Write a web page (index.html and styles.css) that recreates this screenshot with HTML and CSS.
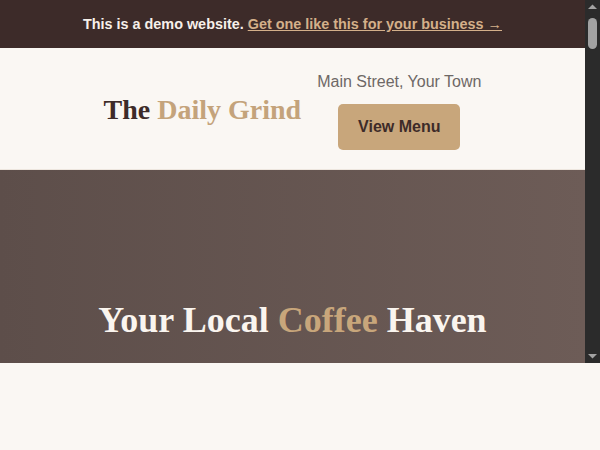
FILE: index.html
```html
<!DOCTYPE html>
<html lang="en">
<head>
<meta charset="utf-8">
<title>The Daily Grind</title>
<link rel="stylesheet" href="styles.css">
</head>
<body>
<div class="window">
  <div class="viewport">
    <div class="demo-bar">
      <span class="demo-note">This is a demo website.</span>
      <a class="demo-link" href="#">Get one like this for your business →</a>
    </div>
    <header class="site-header">
      <div class="logo">The <span class="accent">Daily Grind</span></div>
      <div class="header-info">
        <div class="address">Main Street, Your Town</div>
        <a class="btn" href="#">View Menu</a>
      </div>
    </header>
    <section class="hero">
      <h1 class="hero-title">Your Local <span class="accent">Coffee</span> Haven</h1>
    </section>
  </div>
  <div class="scrollbar" aria-hidden="true">
    <svg class="sb-arrow" width="15" height="14" viewBox="0 0 15 14"><polygon points="3,9 12,9 7.5,4.5" fill="#a3a3a3"/></svg>
    <div class="sb-track"><div class="sb-thumb"></div></div>
    <svg class="sb-arrow" width="15" height="14" viewBox="0 0 15 14"><polygon points="3,5 12,5 7.5,9.5" fill="#a3a3a3"/></svg>
  </div>
</div>
</body>
</html>
```
FILE: styles.css
```css
html, body {
  margin: 0;
  padding: 0;
}
body {
  background: #faf7f3;
  font-family: "Liberation Sans", Arial, sans-serif;
}
.window {
  display: flex;
  height: 363px;
}
.viewport {
  flex: 1;
  min-width: 0;
  overflow: hidden;
  background: #faf7f3;
}
.scrollbar {
  width: 15px;
  flex: none;
  background: #2b2b2b;
  display: flex;
  flex-direction: column;
}
.sb-arrow {
  display: block;
  flex: none;
}
.sb-track {
  flex: 1;
  padding: 4px 3px 0;
}
.sb-thumb {
  height: 31px;
  background: #a2a2a2;
  border-radius: 5px;
}
.demo-bar {
  height: 48px;
  background: #3d2b29;
  display: flex;
  align-items: center;
  justify-content: center;
  gap: 4px;
  font-size: 14.4px;
  font-weight: bold;
}
.demo-note {
  color: #f7f0ea;
}
.demo-link {
  color: #d4b08a;
  text-decoration: underline;
}
.site-header {
  background: #faf7f3;
  display: flex;
  align-items: center;
  justify-content: center;
  gap: 16px;
  padding: 25px 0 19px;
  border-bottom: 1px solid #ede6de;
}
.logo {
  font-family: "Liberation Serif", "Times New Roman", serif;
  font-weight: bold;
  font-size: 28px;
  color: #3d2b29;
  padding-bottom: 3px;
}
.accent {
  color: #c4a37b;
}
.header-info {
  display: flex;
  flex-direction: column;
  align-items: center;
  gap: 13px;
}
.address {
  font-size: 16px;
  color: #6e6866;
}
.btn {
  display: block;
  width: 122px;
  height: 46px;
  line-height: 46px;
  text-align: center;
  background: #c8a67b;
  color: #3d2b29;
  font-weight: bold;
  font-size: 16px;
  border-radius: 5px;
  text-decoration: none;
}
.hero {
  background: linear-gradient(90deg, #5d4e4a 0%, #6d5c57 100%);
  padding: 129px 20px 120px;
  text-align: center;
}
.hero-title {
  margin: 0;
  font-family: "Liberation Serif", "Times New Roman", serif;
  font-weight: bold;
  font-size: 36px;
  color: #faf5ef;
}
.hero-title .accent {
  color: #c8a67b;
}
```
